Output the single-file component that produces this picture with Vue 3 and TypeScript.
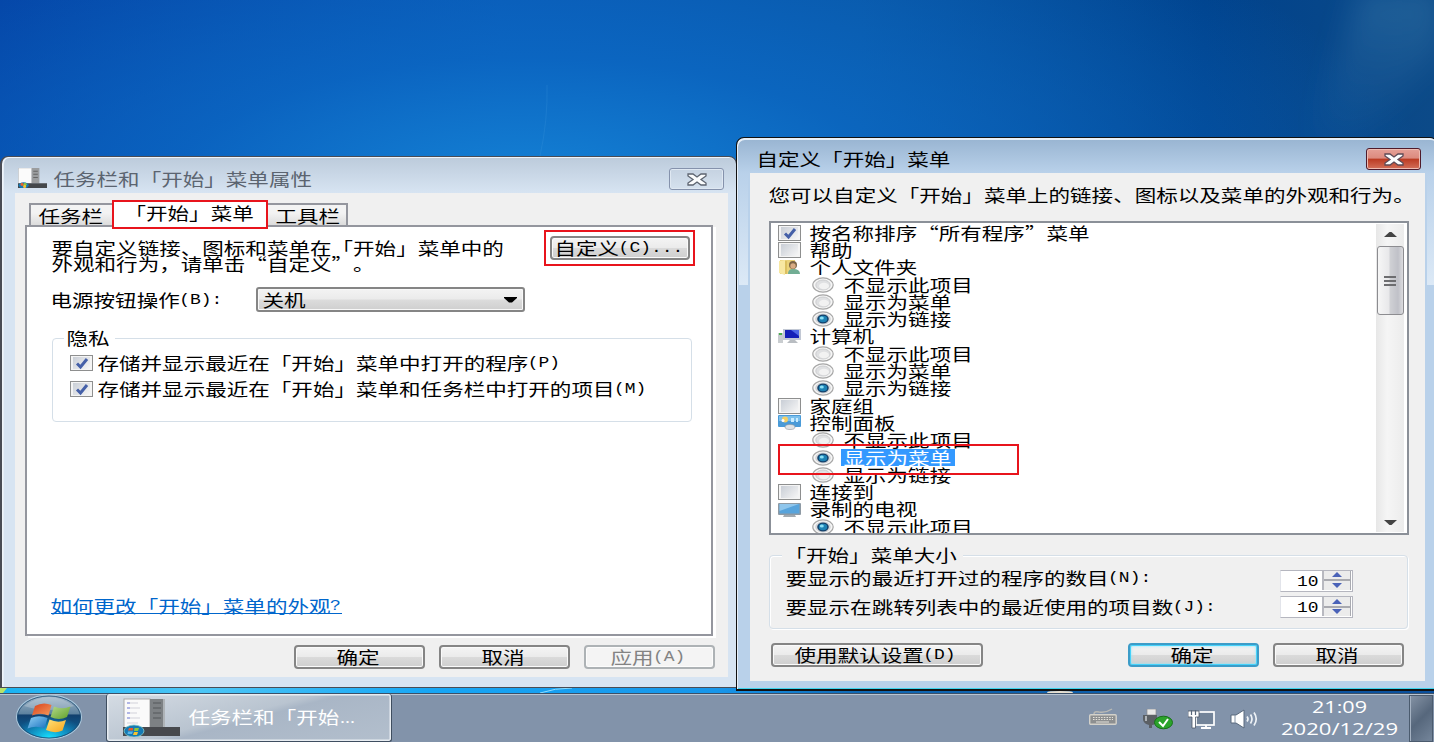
<script setup lang="ts">
import { h, type FunctionalComponent } from 'vue'

interface TxProps { t: string; cell?: number; size?: number; w?: number }

const isWide = (c: string): boolean => c.charCodeAt(0) > 0x2e80 || c === '“' || c === '”'

// Text stretched to a fixed cell width: wide glyphs take one cell, Latin glyphs half a cell.
const Tx: FunctionalComponent<TxProps> = (props) => {
  const cell = props.cell ?? 21.54
  const size = props.size ?? 17
  if (props.w) {
    return h('svg', { class: 'tx', width: props.w, height: 18 }, [
      h('text', { class: 'tx-ui', x: 0, y: 14.6, 'font-size': size, textLength: props.w, lengthAdjust: 'spacingAndGlyphs' }, props.t),
    ])
  }
  const runs: { s: string; wide: boolean }[] = []
  for (const c of props.t) {
    const wide = isWide(c)
    const last = runs[runs.length - 1]
    if (last && last.wide === wide) last.s += c
    else runs.push({ s: c, wide })
  }
  let x = 0
  const nodes = runs.map((r) => {
    const w = r.s.length * (r.wide ? cell : cell / 2)
    const node = h('text', {
      class: r.wide ? 'tx-cjk' : 'tx-lat', x: x - (r.wide ? 0.5 : 1), y: r.wide ? 15.6 : 13.4,
      'font-size': r.wide ? size : size - 2, textLength: w, lengthAdjust: 'spacingAndGlyphs',
    }, r.s)
    x += w
    return node
  })
  return h('svg', { class: 'tx', width: x, height: 18 }, nodes)
}
Tx.props = ['t', 'cell', 'size', 'w']

type Kind = 'check' | 'icon' | 'radio'
interface Item { kind: Kind; text: string; on?: boolean; icon?: string; sel?: boolean }

const radios = (on: number, sel = -1): Item[] =>
  ['不显示此项目', '显示为菜单', '显示为链接'].map((text, i) => ({ kind: 'radio', text, on: i === on, sel: i === sel }))

const items: Item[] = [
  { kind: 'check', text: '按名称排序“所有程序”菜单', on: true },
  { kind: 'check', text: '帮助' },
  { kind: 'icon', text: '个人文件夹', icon: 'folder' },
  ...radios(2),
  { kind: 'icon', text: '计算机', icon: 'pc' },
  ...radios(2),
  { kind: 'check', text: '家庭组' },
  { kind: 'icon', text: '控制面板', icon: 'panel' },
  ...radios(1, 1),
  { kind: 'check', text: '连接到' },
  { kind: 'icon', text: '录制的电视', icon: 'tv' },
  { kind: 'radio', text: '不显示此项目', on: true },
]
const privacy = ['存储并显示最近在「开始」菜单中打开的程序(P)', '存储并显示最近在「开始」菜单和任务栏中打开的项目(M)']
const sizes = ['要显示的最近打开过的程序的数目(N):', '要显示在跳转列表中的最近使用的项目数(J):']
</script>

<template>
  <div class="desktop">
    <svg class="rays" width="1434" height="742" viewBox="0 0 1434 742">
      <defs>
        <linearGradient id="ray" x1="0" y1="0" x2="0" y2="1">
          <stop offset="0" stop-color="#6fb0d0" stop-opacity=".22" /><stop offset="1" stop-color="#6fb0d0" stop-opacity="0" />
        </linearGradient>
        <filter id="soft" x="-50%" y="-50%" width="200%" height="200%"><feGaussianBlur stdDeviation="14" /></filter>
        <linearGradient id="strip">
          <stop offset="0" stop-color="#19b2f2" /><stop offset=".14" stop-color="#4cc6f6" /><stop offset=".3" stop-color="#16a6f5" />
          <stop offset=".5" stop-color="#1796ea" /><stop offset=".6" stop-color="#0f68b4" /><stop offset="1" stop-color="#0a4f9c" />
        </linearGradient>
      </defs>
      <path d="M1360 -10H1440V50L1350 150H1310Z" fill="url(#ray)" filter="url(#soft)" />
      <path d="M547 85Q548 120 540 156" stroke="#3f98dc" stroke-opacity=".25" fill="none" />
      <rect y="685" width="1434" height="9" fill="url(#strip)" />
      <path d="M0 693V688H7L3 693Z" fill="#b7e36a" />
      <path d="M540 693Q555 688 572 688" stroke="#8fdcff" fill="none" />
      <ellipse cx="1060" cy="692.5" rx="13" ry="1.6" fill="#e8e0d0" />
    </svg>

    <section class="win win-props">
      <header class="bar">
        <svg class="bar-icon" width="29" height="20" viewBox="0 0 57 38" preserveAspectRatio="none">
          <rect x="1" y="0" width="26" height="29" fill="#fbfbfb" stroke="#bbb" />
          <rect x="27" y="0" width="15" height="29" fill="#9b9d9f" /><path d="M30 6H39M30 12H39M30 18H39" stroke="#666" stroke-width="2" />
          <rect x="0" y="29" width="57" height="9" fill="#44474b" />
          <ellipse cx="11" cy="33" rx="10" ry="6" fill="#1679b5" /><circle cx="8" cy="31" r="3" fill="#e8622c" /><circle cx="14" cy="31" r="3" fill="#8cc63f" /><circle cx="13" cy="35" r="3" fill="#fbc22d" />
        </svg>
        <Tx class="bar-title dim" t="任务栏和「开始」菜单属性" :size="17" />
        <button class="close"><svg width="22" height="13" viewBox="0 0 22 13"><path d="M2 1H7L11 4L15 1H20V3L15 6.5L20 10V12H15L11 9L7 12H2V10L7 6.5L2 3Z" fill="#fbfcfd" stroke="#5d6470" stroke-width="1.3" /></svg></button>
      </header>
      <div class="client">
        <nav class="tabs">
          <div class="tab tab-a"><Tx t="任务栏" /></div>
          <div class="tab tab-on"><Tx t="「开始」菜单" /></div>
          <div class="tab tab-c"><Tx t="工具栏" /></div>
        </nav>
        <div class="page">
          <div class="intro">
            <div class="intro-text"><Tx t="要自定义链接、图标和菜单在「开始」菜单中的" /><Tx t="外观和行为，请单击“自定义”。" /></div>
            <div class="mark"><button class="btn customize"><Tx t="自定义(C)..." /></button></div>
          </div>
          <div class="power">
            <Tx t="电源按钮操作(B):" />
            <div class="select"><Tx t="关机" /><svg width="13" height="6" viewBox="0 0 13 6"><path d="M0 0H13V1L8 5.5H5L0 1Z" fill="#000" /></svg></div>
          </div>
          <div class="group privacy">
            <div class="legend"><Tx t="隐私" /></div>
            <label v-for="p in privacy" :key="p" class="check-row">
              <span class="check"><i><svg width="16" height="13" viewBox="0 0 16 13"><path d="M3 6.500L6.5 10L13 2" fill="none" stroke="#4560a8" stroke-width="3" /></svg></i></span>
              <Tx :t="p" />
            </label>
          </div>
          <a class="link"><Tx t="如何更改「开始」菜单的外观?" /></a>
        </div>
        <footer class="actions">
          <button class="btn std"><Tx t="确定" /></button>
          <button class="btn std"><Tx t="取消" /></button>
          <button class="btn std off"><Tx t="应用(A)" /></button>
        </footer>
      </div>
    </section>

    <section class="win win-custom">
      <header class="bar">
        <Tx class="bar-title" t="自定义「开始」菜单" />
        <button class="close red"><svg width="22" height="13" viewBox="0 0 22 13"><path d="M2 1H7L11 4L15 1H20V3L15 6.5L20 10V12H15L11 9L7 12H2V10L7 6.5L2 3Z" fill="#fbfcfd" stroke="#5d4a56" stroke-width="1.3" /></svg></button>
      </header>
      <div class="client">
        <Tx class="desc" t="您可以自定义「开始」菜单上的链接、图标以及菜单的外观和行为。" />
        <div class="list">
          <div class="rows">
            <div v-for="(it, i) in items" :key="i" class="row" :class="'row-' + it.kind">
              <span v-if="it.kind === 'check'" class="check"><i><svg v-if="it.on" width="16" height="13" viewBox="0 0 16 13"><path d="M3 6.500L6.5 10L13 2" fill="none" stroke="#4560a8" stroke-width="3" /></svg></i></span>
              <svg v-else-if="it.kind === 'radio'" class="glyph" width="22" height="16" viewBox="0 0 22 16">
                <ellipse cx="11" cy="8" rx="10.2" ry="7.2" fill="#f6f6f6" stroke="#a6a6a6" stroke-width="1.2" />
                <ellipse cx="11" cy="8" rx="7.2" ry="5" fill="#dfe0e2" stroke="#cccdcf" />
                <ellipse cx="12" cy="9" rx="5" ry="3.2" fill="#f2f2f2" />
                <template v-if="it.on"><ellipse cx="11" cy="8" rx="5.8" ry="4.6" fill="#15416a" /><ellipse cx="11" cy="8" rx="4.2" ry="3.2" fill="#1d82b4" /><ellipse cx="9.8" cy="7" rx="2" ry="1.500" fill="#8be0f5" /></template>
              </svg>
              <svg v-else-if="it.icon === 'folder'" class="glyph" width="23" height="17" viewBox="0 0 23 17">
                <path d="M2 1H17V15H2Z" fill="#ead27a" /><path d="M1 2L7 1V16L1 14Z" fill="#f8e8a2" /><path d="M7 2H9V15H7Z" fill="#dcc060" />
                <circle cx="15" cy="6" r="4" fill="#7d6548" /><circle cx="15" cy="7" r="2.7" fill="#d9ac84" /><path d="M10 15Q10 10 15 10Q22 10 22 15Z" fill="#72ad94" />
              </svg>
              <svg v-else-if="it.icon === 'pc'" class="glyph" width="23" height="17" viewBox="0 0 23 17">
                <rect x="0" y="5" width="5" height="10" fill="#c9cdd0" /><rect x="1" y="5" width="3" height="2" fill="#49b04c" />
                <rect x="5" y="1" width="18" height="11" fill="#c2c8d4" /><rect x="7" y="2" width="14" height="8" fill="#1520b8" /><path d="M13 2H21V8Z" fill="#4e67e6" /><path d="M10 14L12 12H17L20 15H9Z" fill="#b9bdc2" />
              </svg>
              <svg v-else-if="it.icon === 'panel'" class="glyph" width="23" height="17" viewBox="0 0 23 17">
                <rect x="0" y="1" width="23" height="12" rx="1" fill="#4a9bd8" /><rect x="1" y="2" width="21" height="5" fill="#7cc0ec" />
                <circle cx="7" cy="5.500" r="3" fill="#f4cf63" /><circle cx="5" cy="6.500" r="1.500" fill="#fff" /><path d="M13 4H16V8H13ZM18 4H20V8H18Z" fill="#c9ecff" /><ellipse cx="12" cy="13" rx="5" ry="2.5" fill="#dfe3e6" stroke="#8d969c" stroke-width=".6" />
              </svg>
              <svg v-else class="glyph" width="23" height="17" viewBox="0 0 23 17">
                <rect x="0" y="2" width="23" height="12" rx="1" fill="#8e9aa4" /><rect x="1.500" y="3" width="20" height="9.500" fill="#58a4dc" /><path d="M1.500 3H21L1.500 10Z" fill="#8fc6ec" /><path d="M6 14H17L18 16H5Z" fill="#a3abb1" />
              </svg>
              <span class="name" :class="{ sel: it.sel }"><Tx :t="it.text" /></span>
            </div>
          </div>
          <div class="scroll">
            <svg width="13" height="5" viewBox="0 0 13 5"><path d="M0 5L5.500 0H7.500L13 5Z" fill="#444" /></svg>
            <div class="thumb"><i></i><i></i><i></i></div>
            <svg class="down" width="13" height="5" viewBox="0 0 13 5"><path d="M0 0L5.500 5H7.500L13 0Z" fill="#444" /></svg>
          </div>
          <div class="redbox"></div>
        </div>
        <div class="group sizes">
          <div class="legend"><Tx t="「开始」菜单大小" /></div>
          <div v-for="s in sizes" :key="s" class="size-row">
            <Tx :t="s" />
            <div class="spin">
              <Tx class="num" t="10" />
              <div class="arrows">
                <span><svg width="10" height="5" viewBox="0 0 10 5"><path d="M0 5L5 0L10 5Z" fill="#4a62b8" /></svg></span>
                <span><svg width="10" height="5" viewBox="0 0 10 5"><path d="M0 0L5 5L10 0Z" fill="#4a62b8" /></svg></span>
              </div>
            </div>
          </div>
        </div>
        <footer class="actions">
          <button class="btn defaults"><Tx t="使用默认设置(D)" /></button>
          <button class="btn std hot"><Tx t="确定" /></button>
          <button class="btn std"><Tx t="取消" /></button>
        </footer>
      </div>
    </section>

    <div class="taskbar">
      <svg class="orb" width="68" height="46" viewBox="0 0 68 46">
        <defs>
          <linearGradient id="orb" x1="0" y1="0" x2="0" y2="1"><stop offset="0" stop-color="#a3b8ca" /><stop offset=".42" stop-color="#5f83a0" /><stop offset=".46" stop-color="#12406e" /><stop offset="1" stop-color="#0a6da6" /></linearGradient>
          <radialGradient id="glow" cx=".5" cy="1" r=".55"><stop offset="0" stop-color="#18e4ff" /><stop offset="1" stop-color="#18b4ec" stop-opacity="0" /></radialGradient>
          <linearGradient id="fr" x1="0" y1="0" x2="1" y2="1"><stop offset="0" stop-color="#d9401a" /><stop offset="1" stop-color="#f39a5c" /></linearGradient>
          <linearGradient id="fg" x1="0" y1="0" x2="1" y2="1"><stop offset="0" stop-color="#b3d98a" /><stop offset="1" stop-color="#5f9f28" /></linearGradient>
          <linearGradient id="fb" x1="0" y1="0" x2="1" y2="1"><stop offset="0" stop-color="#8fd0f5" /><stop offset="1" stop-color="#1a72c0" /></linearGradient>
          <linearGradient id="fy" x1="0" y1="0" x2="1" y2="1"><stop offset="0" stop-color="#ffe27a" /><stop offset="1" stop-color="#f7a51c" /></linearGradient>
        </defs>
        <ellipse cx="34" cy="23" rx="32.500" ry="21.800" fill="url(#orb)" stroke="#a9c8dd" stroke-width="1.200" />
        <ellipse cx="34" cy="23" rx="31.500" ry="21" fill="url(#glow)" stroke="#1e4a70" stroke-width=".8" />
        <path d="M9 12Q34 -6 59 12Q34 20 9 12Z" fill="#fff" opacity=".22" />
        <path d="M20 12Q28 7.500 36.500 11L33.500 21.500Q25 18 17 21.500Z" fill="url(#fr)" />
        <path d="M39 12.500Q47 16 55.500 12.500L52 23Q44 27 35.500 23Z" fill="url(#fg)" />
        <path d="M16 24Q24 20.500 32.500 24L29.500 34.500Q21 31 12.500 34.500Z" fill="url(#fb)" />
        <path d="M34.500 25.500Q43 29.500 51 26L47.500 36.500Q40 40 31 36Z" fill="url(#fy)" />
      </svg>
      <div class="task">
        <svg width="58" height="39" viewBox="0 0 58 39">
          <rect x="1" y="1" width="26" height="29" fill="#fafafa" stroke="#aaa" />
          <path d="M4 5H15M4 10H17M4 15H14M4 20H17M4 25H15" stroke="#d2d2da" /><path d="M4 5H7M4 10H7M4 15H7M4 20H7" stroke="#7d86e0" />
          <rect x="27" y="1" width="15" height="29" fill="#7d8184" /><rect x="40" y="1" width="2" height="29" fill="#aeb3b7" />
          <path d="M30 5H38M30 10H38M30 15H38M30 20H38" stroke="#55585b" stroke-width="1.200" />
          <rect x="0" y="29" width="57" height="9" fill="#47494d" />
          <ellipse cx="11" cy="33" rx="10" ry="6" fill="#157ab4" stroke="#8cc" stroke-width=".8" />
          <path d="M6 30H10V32.500H5Z" fill="#e8582c" /><path d="M11.500 30H16L15 33H11Z" fill="#8cc63f" /><path d="M5 33.500H10L9 36H4.500Z" fill="#56b5ea" /><path d="M11 34H15L14 37H10Z" fill="#fbc22d" />
        </svg>
        <Tx t="任务栏和「开始" :size="17" /><Tx t="..." :w="15" :size="17" />
      </div>
      <div class="tray">
        <svg class="kbd" width="28" height="18" viewBox="0 0 28 18">
          <path d="M5 6Q5 3 10 4Q17 5 23 1" fill="none" stroke="#b9b9b5" stroke-width="1.500" />
          <rect x=".7" y="6.700" width="26.500" height="9.500" rx="1" fill="#8d8f90" stroke="#d3d1ca" stroke-width="1.400" />
          <path d="M4 9.500H24M4 11.500H24" stroke="#e6e4dd" stroke-width="1.200" stroke-dasharray="1.500 1.200" /><path d="M7 14H20" stroke="#e6e4dd" />
        </svg>
        <svg class="usb" width="30" height="21" viewBox="0 0 30 21">
          <rect x="4" y="0" width="9" height="6" fill="#e8e8e8" stroke="#8b8b8b" stroke-width=".7" /><path d="M0 6H14V12Q12 16 9 16V19H6V16Q1 15 0 11Z" fill="#5b6065" /><path d="M3 7V12" stroke="#aeb3b7" stroke-width="2" />
          <ellipse cx="20.500" cy="13.500" rx="9" ry="6.300" fill="#2ba32b" stroke="#177217" /><path d="M16 13L20 17L25 10" stroke="#fff" stroke-width="2" fill="none" />
        </svg>
        <svg class="net" width="29" height="21" viewBox="0 0 29 21">
          <rect x="8" y="3" width="18" height="13" fill="#738499" stroke="#fff" stroke-width="1.700" /><path d="M13 19H23M18 16V19" stroke="#fff" stroke-width="1.800" />
          <path d="M0 2H11V8H7.500V19H4V8H0Z" fill="#fff" stroke="#4b5766" stroke-width=".8" /><path d="M3.500 1V6M7.500 1V6" stroke="#58677a" stroke-width="1.200" />
        </svg>
        <svg class="vol" width="30" height="20" viewBox="0 0 30 20">
          <path d="M1 6H6L14 1V19L6 14H1Z" fill="#fff" stroke="#59697c" stroke-width="1" /><path d="M5 6V14" stroke="#8594a6" />
          <path d="M17 7.500Q19 10 17 12.500M20.500 5.500Q23.500 10 20.500 14.500M24 3.500Q28.500 10 24 16.500" fill="none" stroke="#eef2f6" stroke-width="1.700" />
        </svg>
        <div class="clock"><Tx t="21:09" :w="55" :size="16" /><Tx t="2020/12/29" :w="117" :size="16" /></div>
        <div class="peek"></div>
      </div>
    </div>
  </div>
</template>

<style>
html, body { margin: 0; overflow: hidden; }
.tx { display: block; flex: none; overflow: visible; fill: currentColor; text-spacing-trim: space-all; }
.tx-cjk { font-family: "Noto Sans CJK SC", sans-serif; }
.tx-lat { font-family: "Liberation Mono", monospace; }
.tx-ui { font-family: "Open Sans", "Noto Sans CJK SC", sans-serif; }
</style>

<style scoped>
* { box-sizing: border-box; }
.desktop {
  position: relative; width: 1434px; height: 742px; overflow: hidden; color: #000;
  font-family: "Noto Sans CJK SC", sans-serif;
  background:
    radial-gradient(ellipse 900px 330px at 530px 190px, #1583d6 0%, rgba(12, 108, 200, .75) 40%, rgba(6, 80, 175, 0) 100%),
    linear-gradient(90deg, #033da0 0%, #0852ae 35%, #08529f 60%, #00428c 84%, #0c4a88 100%);
}
.rays { position: absolute; left: 0; top: 0; }
.win { position: absolute; display: flex; flex-direction: column; border-style: solid; }
.win-props {
  left: 0; top: 156px; width: 737px; height: 532px; padding: 0 8px 10px 13px;
  border-width: 1px 1px 1px 2px; border-color: #494c55; border-radius: 8px 8px 0 0;
  background: linear-gradient(#bccbdb, #d7e4f2 36px); box-shadow: inset 1px 1px 0 #eef4fa, inset 2px 0 0 #e6eef7;
}
.win-custom {
  left: 736px; top: 137px; width: 702px; height: 554px; padding: 0 12px 8px 13px;
  border-width: 1px 1px 2px 1px; border-color: #111; border-radius: 8px 8px 0 0;
  background:
    linear-gradient(#b9d1ea, #dce9f6) 2px 35px / 9px 112px no-repeat,
    linear-gradient(#b9d1ea, #dce9f6) 690px 35px / 9px 112px no-repeat,
    linear-gradient(#98b4d1, #b9d1ea 35px);
  box-shadow: inset 1px 2px 0 #e8f0f8, inset 0 -1px 0 #3fd4ee;
}
.bar { display: flex; height: 36px; flex: none; }
.win-custom .bar { height: 35px; }
.bar-icon { margin: 11px 0 0 3px; }
.win-props .bar-title { margin: 13px 0 0 7px; }
.win-custom .bar-title { margin: 12px 0 0 7px; }
.dim { color: #5b6470; }
.close {
  margin: 11px 4px 0 auto; width: 55px; height: 22px; padding: 0; display: grid; place-items: center;
  border: 1.500px solid #8592ac; border-radius: 3px; background: linear-gradient(#c5d2e1, #d5e1ee); box-shadow: inset 0 0 0 1px #dfe8f2;
}
.win-custom .close { margin: 10px 4px 0 auto; }
.close.red {
  border-color: #4f1b2b; background: linear-gradient(#e5a097, #dc8a7e 46%, #bb3a22 50%, #d4705a); box-shadow: inset 0 0 0 1px #eebcb2;
}
.client { flex: 1; min-height: 0; background: #f0f0f0; }
.tabs { display: flex; height: 32px; padding: 10px 0 0 14px; }
.tab { height: 22px; border: 2px solid #94969e; border-bottom: 0; background: linear-gradient(#f3f3f3 40%, #dcdcdc); }
.tab-a { width: 83px; padding: 2px 0 0 8px; border-right: 0; }
.tab-on { position: relative; z-index: 1; width: 156px; height: 29px; margin-top: -3px; padding: 2px 0 0 11px; border: 2px solid #e8141c; background: #fff; }
.tab-c { width: 80px; padding: 2px 0 0 8px; border-left: 0; }
.page {
  display: flex; flex-direction: column; width: 688px; height: 411px; margin-left: 10px; padding-left: 25px;
  border: 2px solid #94969e; background: #fff; box-shadow: 3px 2px 0 #fff;
}
.intro { display: flex; height: 58px; }
.intro-text { width: 492px; padding-top: 12px; }
.intro-text .tx + .tx { margin-top: -2.500px; }
.mark { width: 151px; height: 36px; margin-top: 3px; padding: 4px; border: 2px solid #e8141c; }
.btn {
  display: flex; align-items: center; justify-content: center; height: 24px; padding: 0 2px 0 0; color: #000;
  border: 2px solid #858585; border-radius: 4px;
  background: linear-gradient(#f4f4f4, #ebebeb 48%, #dadada 52%, #cfcfcf); box-shadow: inset 0 0 0 1px #fafafa;
}
.customize { width: 140px; justify-content: flex-start; padding: 0 0 1px 3px; }
.power { display: flex; align-items: center; height: 29px; margin-left: -1px; }
.select {
  display: flex; align-items: center; justify-content: space-between; width: 269px; height: 25px; margin-left: 32.500px; padding: 0 6px 0 5px;
  border: 2px solid #858585; border-radius: 3px; background: linear-gradient(#f3f3f3, #ebebeb 48%, #dcdcdc 52%, #cfcfcf); box-shadow: inset 0 0 0 1px #f8f8f8;
}
.group { border: 1.500px solid #d5dfe8; border-radius: 4px; }
.legend { width: max-content; }
.privacy { width: 640px; height: 84px; margin-top: 24px; padding-left: 11px; }
.privacy .legend { margin-top: -10px; padding: 0 5px 0 3px; margin-bottom: 3px; background: #fff; }
.check-row { display: flex; align-items: center; height: 26px; padding-left: 6px; }
.check-row .tx { margin-left: 5px; }
.check { flex: none; display: block; width: 23px; height: 16px; padding: 1px 2px; border: 1.500px solid #8e8f8f; background: #f4f4f4; }
.check i { display: grid; place-items: center; width: 100%; height: 100%; background: linear-gradient(135deg, #c9ced6, #f6f6f6); }
.link { width: 291px; height: 17px; margin-top: 175px; margin-left: -1px; color: #0066cc; border-bottom: 1.500px solid #0066cc; }
.win-props .actions { display: flex; justify-content: flex-end; gap: 14px; padding: 9px 13px 0 0; }
.std { width: 131px; }
.off { color: #838383; border-color: #adb2b5; background: #f4f4f4; box-shadow: inset 0 0 0 1px #fcfcfc; }
.hot { border-color: #3c9cc8; box-shadow: inset 0 0 0 1px #45d2fa, inset 0 0 3px 1px #8fe4fb; }
.desc { margin: 13px 0 0 19px; }
.list {
  position: relative; display: flex; justify-content: space-between; width: 640px; height: 314px; margin: 17px 0 0 19px;
  border: 2px solid #8b9098; background: #fff;
}
.rows { height: 310px; overflow: hidden; padding: 1px 0 0 7px; }
.row { display: flex; align-items: center; height: 17.300px; }
.row-radio { padding-left: 34px; }
.glyph { flex: none; display: block; }
.name { margin-left: 9px; }
.row-radio .name { margin-left: 7px; padding: 0 3px; }
.name.sel { height: 17px; color: #fff; background: #3399ff; }
.scroll { display: flex; flex-direction: column; align-items: center; width: 28px; margin: 1px 3px 1px 0; padding-top: 8px; background: linear-gradient(90deg, #e7e7e7, #f5f5f5 40%, #ececec); }
.thumb {
  display: flex; flex-direction: column; align-items: center; justify-content: center; gap: 2px; width: 27px; height: 69px; margin-top: 9px;
  border: 1.500px solid #8c8c90; border-radius: 3px; background: linear-gradient(90deg, #f6f6f6, #e8e8ea 44%, #d0d1d5 48%, #c0c1c8 80%, #dcdcdf);
}
.thumb i { width: 12px; height: 2px; background: #6d6d70; }
.down { margin-top: auto; margin-bottom: 7px; }
.redbox { position: absolute; left: 7px; top: 221px; width: 241px; height: 31px; border: 2px solid #e8141c; }
.sizes { width: 639px; height: 74px; margin: 20px 0 0 19px; padding-left: 12px; box-shadow: inset 1px 1px 0 #fff, 1px 1px 0 #fff; }
.sizes .legend { margin-top: -10px; padding: 0 6px 0 3px; background: #f0f0f0; }
.size-row { display: flex; align-items: center; height: 28px; padding-left: 4px; }
.size-row:nth-child(3) { margin-top: 1px; }
.spin { display: flex; width: 73px; height: 22px; margin-left: auto; margin-right: 54px; border: 1.500px solid #c3c4cb; border-color: #b5b6bf #b5b6bf #b5b6bf #e2e4ea; background: #fff; }
.size-row:nth-child(2) .spin { margin-top: 5px; }
.num { margin: 2px 2px 0 17px; }
.arrows { display: flex; flex-direction: column; width: 29px; margin: 0 1px 1px auto; padding-right: 1px; border-left: 2px solid #b8b9c0; background: #a9aab0; }
.arrows span { flex: 1; display: grid; place-items: center; background: #ececec; }
.arrows span + span { margin-top: 2px; }
.win-custom .actions { display: flex; padding: 14px 0 0 21px; }
.defaults { width: 212px; margin-right: 145px; }
.hot { margin-right: 14px; }
.taskbar {
  position: absolute; left: 0; bottom: 0; display: flex; width: 1434px; height: 49px;
  background: #8293aa; border-top: 1px solid #3b5068; box-shadow: inset 0 1px 0 #b9c5d2;
}
.orb { margin: 0 0 0 15px; }
.task {
  display: flex; align-items: center; width: 286px; height: 48px; margin-left: 23px; padding-left: 16px; color: #fff;
  border: 1.500px solid #3f4e60; border-top: 0; border-radius: 3px; box-shadow: inset 0 0 0 1.500px #e8edf2;
  background: linear-gradient(165deg, #d5dce4 0%, #b9c4d0 46%, #a9b6c6 52%, #b3bfcd 100%);
}
.task .tx { margin: -1px 0 0 8px; }
.task .tx + .tx { margin-left: 0; }
.tray { display: flex; margin-left: auto; }
.kbd { margin: 14px 26px 0 0; }
.usb { margin: 15px 15px 0 0; }
.net { margin: 15px 13px 0 0; }
.vol { margin: 15px 21px 0 0; }
.clock { display: flex; flex-direction: column; align-items: center; gap: 4px; width: 117px; padding-top: 4px; color: #fff; }
.peek { width: 24px; margin: 1px 1px 0 11px; border: 1px solid #4b5b6e; background: linear-gradient(135deg, #8593a5, #56677c 50%, #74859a); box-shadow: inset 1px 0 0 #a5b2c2; }
</style>
